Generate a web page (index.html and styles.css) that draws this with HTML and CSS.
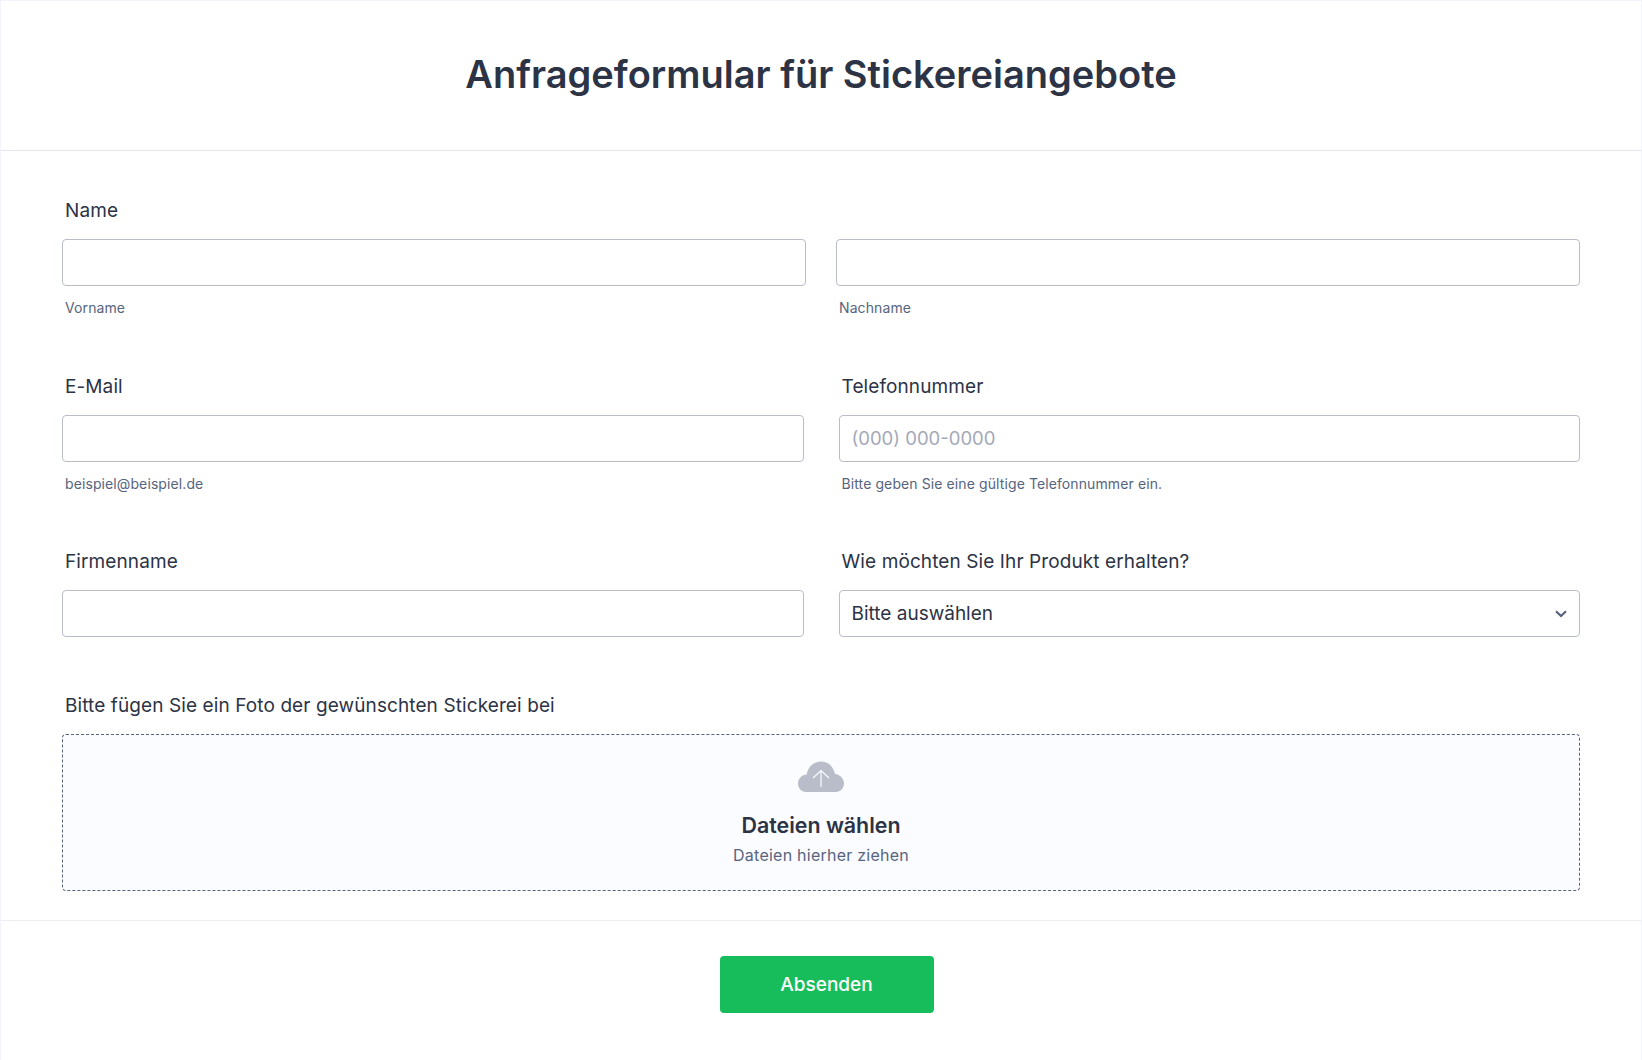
FILE: index.html
```html
<!DOCTYPE html>
<html lang="de">

<head>
    <meta charset="UTF-8">
    <meta name="viewport" content="width=device-width, initial-scale=1.0">
    <title>Anfrageformular für Stickereiangebote</title>
    <link rel="stylesheet" href="styles.css">
</head>

<body>
    <form class="form-page">
        <header class="form-header">
            <h1>Anfrageformular für Stickereiangebote</h1>
        </header>

        <div class="form-body">
            <div class="form-row row-name">
                <div class="field field-wide">
                    <label class="field-label">Name</label>
                    <div class="name-inputs">
                        <div>
                            <input class="text-input" type="text">
                            <p class="field-hint">Vorname</p>
                        </div>
                        <div>
                            <input class="text-input" type="text">
                            <p class="field-hint">Nachname</p>
                        </div>
                    </div>
                </div>
            </div>

            <div class="form-row">
                <div class="field">
                    <label class="field-label">E-Mail</label>
                    <input class="text-input" type="email">
                    <p class="field-hint">beispiel@beispiel.de</p>
                </div>
                <div class="field">
                    <label class="field-label">Telefonnummer</label>
                    <input class="text-input" type="tel" placeholder="(000) 000-0000">
                    <p class="field-hint">Bitte geben Sie eine gültige Telefonnummer ein.</p>
                </div>
            </div>

            <div class="form-row row-short">
                <div class="field">
                    <label class="field-label">Firmenname</label>
                    <input class="text-input" type="text">
                </div>
                <div class="field">
                    <label class="field-label">Wie möchten Sie Ihr Produkt erhalten?</label>
                    <div class="select-wrap">
                        <select class="text-input select-input">
                            <option>Bitte auswählen</option>
                        </select>
                        <svg class="select-arrow" width="12" height="8" viewBox="0 0 12 8" fill="none">
                            <path d="M1 1.200 6 6 11 1.200" stroke="#57647e" stroke-width="2.200" />
                        </svg>
                    </div>
                </div>
            </div>

            <div class="field">
                <label class="field-label">Bitte fügen Sie ein Foto der gewünschten Stickerei bei</label>
                <div class="upload-box">
                    <svg class="upload-icon" width="46" height="32" viewBox="0 0 46 32">
                        <path d="M8 31C3.500 31 0 27.200 0 22.500C0 17.500 4 13.500 8.700 13.500C10 6 15.500 0.500 23 0.500C30 0.500 35.500 5.500 37 13C42 13.500 46 17.500 46 22.500C46 27.200 42.500 31 38 31Z" fill="#b8bdc9" />
                        <path d="M23 26V9.500M15 17 23 9.500 31 17" stroke="#fbfcff" stroke-width="1.200" fill="none" />
                    </svg>
                    <p class="upload-title">Dateien wählen</p>
                    <p class="upload-sub">Dateien hierher ziehen</p>
                </div>
            </div>
        </div>

        <footer class="form-footer">
            <button class="submit-btn" type="button">Absenden</button>
        </footer>
    </form>
</body>

</html>
```

FILE: styles.css
```css
* {
    box-sizing: border-box;
}

body {
    margin: 0;
    font-family: "Inter", sans-serif;
    color: #2c3345;
    background-color: #fff;
}

.form-page {
    height: 1060px;
    border-left: 1px solid #f3f3fe;
    border-right: 1px solid #f3f3fe;
    border-top: 1px solid #f3f3fe;
}

.form-header {
    height: 150px;
    padding-top: 49px;
    text-align: center;
    border-bottom: 1px solid #e3e5ec;
}

.form-header h1 {
    margin: 0;
    font-size: 38px;
    line-height: 48px;
    font-weight: 600;
}

.form-body {
    height: 769px;
    padding: 47px 61px 0 61px;
}

.form-row {
    display: grid;
    grid-template-columns: 1fr 1fr;
    gap: 35px;
    height: 175.500px;
}

.row-name {
    display: block;
}

.row-short {
    height: 144px;
}

.name-inputs {
    display: grid;
    grid-template-columns: 1fr 1fr;
    gap: 30px;
}

.field-label {
    display: block;
    margin: 0 0 15px 3px;
    font-size: 19px;
    line-height: 26px;
    font-weight: 400;
    letter-spacing: 0.1px;
}

.text-input {
    display: block;
    width: 100%;
    height: 47px;
    padding: 0 12px;
    font-family: "Inter", sans-serif;
    font-size: 19px;
    color: #2c3345;
    background-color: #fff;
    border: 1px solid #b8bdc9;
    border-radius: 4px;
}

.text-input::placeholder {
    font-size: 18.500px;
    color: #a3a8b8;
    opacity: 1;
}

.field-hint {
    margin: 13px 0 0 3px;
    font-size: 14px;
    line-height: 17px;
    letter-spacing: 0.1px;
    color: #57647e;
}

.select-wrap {
    position: relative;
}

.select-input {
    appearance: none;
}

.select-arrow {
    position: absolute;
    top: 20px;
    right: 13px;
}

.upload-box {
    display: flex;
    flex-direction: column;
    align-items: center;
    height: 157px;
    padding-top: 26px;
    background-color: #fbfcff;
    border: 1px dashed #57647e;
    border-radius: 4px;
}

.upload-icon {
    display: block;
}

.upload-title {
    margin: 16px 0 0;
    font-size: 21.400px;
    line-height: 32px;
    font-weight: 600;
}

.upload-sub {
    margin: 2px 0 0;
    font-size: 16px;
    line-height: 24px;
    letter-spacing: 0.24px;
    color: #57647e;
}

.form-footer {
    display: flex;
    justify-content: center;
    padding: 35px 0 0 11px;
    border-top: 1px solid #eceef3;
}

.submit-btn {
    width: 214px;
    height: 57px;
    font-family: "Inter", sans-serif;
    font-size: 19px;
    font-weight: 500;
    color: #fff;
    background-color: #18bd5b;
    border: none;
    border-radius: 4px;
}
```
